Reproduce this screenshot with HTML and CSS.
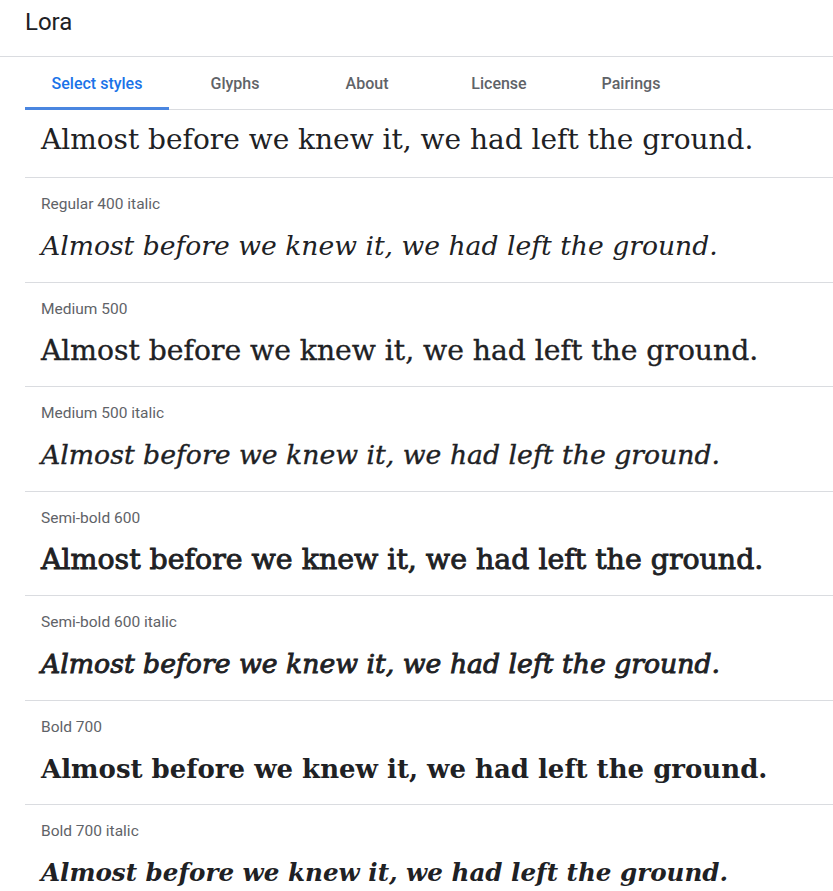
FILE: index.html
```html
<!DOCTYPE html>
<html>
<head>
<meta charset="utf-8">
<link rel="stylesheet" href="styles.css">
</head>
<body>
<header class="header"><span class="title">Lora</span></header>
<nav class="tabs">
  <div class="tab tab-first active">Select styles</div>
  <div class="tab">Glyphs</div>
  <div class="tab">About</div>
  <div class="tab">License</div>
  <div class="tab">Pairings</div>
</nav>
<main class="list">
  <section class="row row-first">
    <div class="sample w400">Almost before we knew it, we had left the ground.</div>
  </section>
  <section class="row">
    <div class="label">Regular 400 italic</div>
    <div class="sample w400 it">Almost before we knew it, we had left the ground.</div>
  </section>
  <section class="row">
    <div class="label">Medium 500</div>
    <div class="sample w500">Almost before we knew it, we had left the ground.</div>
  </section>
  <section class="row">
    <div class="label">Medium 500 italic</div>
    <div class="sample w500 it">Almost before we knew it, we had left the ground.</div>
  </section>
  <section class="row">
    <div class="label">Semi-bold 600</div>
    <div class="sample w600">Almost before we knew it, we had left the ground.</div>
  </section>
  <section class="row">
    <div class="label">Semi-bold 600 italic</div>
    <div class="sample w600 it">Almost before we knew it, we had left the ground.</div>
  </section>
  <section class="row">
    <div class="label">Bold 700</div>
    <div class="sample w700">Almost before we knew it, we had left the ground.</div>
  </section>
  <section class="row">
    <div class="label">Bold 700 italic</div>
    <div class="sample w700 it">Almost before we knew it, we had left the ground.</div>
  </section>
</main>
</body>
</html>
```
FILE: styles.css
```css
html, body {
  margin: 0;
  padding: 0;
  background: #ffffff;
  overflow: hidden;
}
body {
  font-family: Roboto, "Liberation Sans", sans-serif;
  color: #202124;
}
.header {
  border-bottom: 1px solid #dadce0;
  display: flex;
  align-items: center;
  padding-left: 25px;
  box-sizing: border-box;
  height: 57px;
}
.title {
  font-size: 24px;
  line-height: 30px;
  color: #202124;
  margin-top: -12px;
}
.tabs {
  margin-left: 25px;
  height: 52px;
  border-bottom: 1px solid #dadce0;
  display: flex;
}
.tab {
  width: 132px;
  display: flex;
  align-items: center;
  justify-content: center;
  font-size: 16px;
  font-weight: 500;
  color: #5f6368;
  box-sizing: border-box;
}
.tab-first {
  width: 144px;
}
.tab.active {
  color: #1a73e8;
  border-bottom: 3px solid #4a86e0;
  margin-bottom: -1px;
  padding-top: 2px;
}
.list {
  margin-left: 25px;
}
.row {
  border-bottom: 1px solid #dadce0;
  padding: 16px 0 15.5px 16px;
}
.row-first {
  padding-top: 10px;
  padding-bottom: 17px;
}
.label {
  font-size: 15.5px;
  line-height: 20px;
  color: #5f6368;
  margin-bottom: 12px;
}
.sample {
  font-family: "DejaVu Serif", "Liberation Serif", serif;
  font-size: 28px;
  line-height: 40px;
  height: 40px;
  color: #202124;
  white-space: nowrap;
}
.w400 { font-weight: 400; font-size: 28px; }
.w400.it { font-size: 26.6px; }
.w500 { font-weight: 400; font-size: 28.2px; -webkit-text-stroke: 0.35px #202124; }
.w500.it { font-size: 26.7px; }
.w600 { font-weight: 400; font-size: 28.4px; -webkit-text-stroke: 0.9px #202124; }
.w600.it { font-size: 26.7px; }
.w700 { font-weight: 700; font-size: 26px; }
.w700.it { font-size: 24.6px; }
.it { font-style: italic; }
```
